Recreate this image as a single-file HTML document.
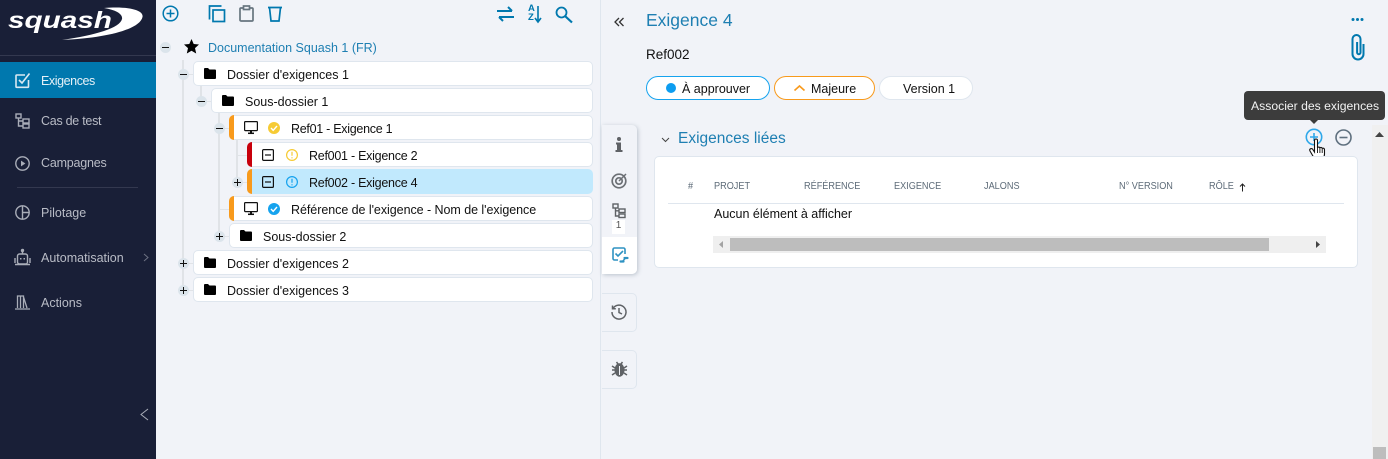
<!DOCTYPE html>
<html><head><meta charset="utf-8"><title>Squash</title>
<style>
*{box-sizing:border-box}
html,body{margin:0;padding:0;width:1388px;height:459px;overflow:hidden;background:#f1f3f8;font-family:"Liberation Sans",sans-serif;font-size:12.5px;color:#111}
.a{position:absolute}
.t{position:absolute;white-space:nowrap;line-height:16px}
#side{left:0;top:0;width:156px;height:459px;background:#191f37}
.nav{position:absolute;left:41px;color:#b9bcc6;font-size:12.5px;line-height:16px;white-space:nowrap}
.row{position:absolute;height:25px;background:#fff;border:1px solid #dfe6ee;border-radius:5px}
.row.s{background:#c1e9fd;border-color:#c1e9fd}
.bar{position:absolute;left:-1px;top:-1px;bottom:-1px;width:5px;border-radius:5px 0 0 5px}
.tg{position:absolute;width:11px;height:11px;border-radius:50%;background:#dbe4eb}
.tg:before{content:"";position:absolute;left:2px;top:5px;width:7px;height:1px;background:#111}
.tg.p:after{content:"";position:absolute;left:5px;top:2px;width:1px;height:7px;background:#111}
.l{position:absolute;background:#e0e3e7}
.th{position:absolute;top:179px;font-size:10.5px;color:#5d6b78;white-space:nowrap;line-height:14px;transform:scaleX(.87);transform-origin:0 0}
.pill{position:absolute;top:76px;height:24px;border-radius:12px;background:#fff;font-size:12.5px;line-height:22px;white-space:nowrap}
svg{position:absolute;overflow:visible}
.tab{position:absolute;left:602px;width:35px;background:#f1f3f8;border:1px solid #dfe6ee;border-left:0;border-radius:0 5px 5px 0}
</style></head><body>

<div id="side" class="a"></div>
<div class="t" style="left:8px;top:6px;font:italic bold 23px/28px 'Liberation Sans',sans-serif;color:#fff;transform:scaleX(1.29);transform-origin:0 0">squash</div>
<svg style="left:0;top:0" width="156" height="60" viewBox="0 0 156 60">
<path d="M104 8C128 6 144 10 142.500 17C140 29 108 38 62 40C96 35 120 28 122 19C123 14 116 10 104 8Z" fill="#fff"/>
</svg>
<div class="a" style="left:0;top:55px;width:156px;height:1px;background:#33384f"></div>
<div class="a" style="left:0;top:62px;width:156px;height:36px;background:#0078ae"></div>
<div class="a" style="left:17px;top:187px;width:121px;height:1px;background:#33384f"></div>

<svg style="left:15px;top:72px" width="15" height="16" fill="none" stroke="#d9e9f2" stroke-width="1.600"><path d="M13.500 8v6.500a.8.800 0 01-.8.800H1.800a.8.800 0 01-.8-.8V3.800a.8.800 0 01.8-.8H10"/><path d="M4 8l3 3 7.500-9.500"/></svg>
<div class="nav" style="top:73px;color:#e6f1f7;letter-spacing:-.42px">Exigences</div>
<svg style="left:15px;top:113px" width="15" height="16" fill="none" stroke="#a9adb8" stroke-width="1.400"><rect x="1" y="1" width="5" height="4"/><rect x="8" y="6" width="6" height="4"/><rect x="8" y="11" width="6" height="4"/><path d="M3.500 5v8H8M3.500 8H8"/></svg>
<div class="nav" style="top:113px;letter-spacing:-.27px">Cas de test</div>
<svg style="left:15px;top:156px" width="15" height="15" fill="none" stroke="#a9adb8" stroke-width="1.400"><circle cx="7.500" cy="7.500" r="6.700"/><path d="M6 4.600v5.800l4.400-2.900z" fill="#a9adb8" stroke="none"/></svg>
<div class="nav" style="top:155px;letter-spacing:-.2px">Campagnes</div>
<svg style="left:15px;top:205px" width="15" height="15" fill="none" stroke="#a9adb8" stroke-width="1.400"><circle cx="7.500" cy="7.500" r="6.700"/><path d="M7.500 1v13M7.500 7.500h6.500"/></svg>
<div class="nav" style="top:205px">Pilotage</div>
<svg style="left:15px;top:249px" width="15" height="17" fill="none" stroke="#a9adb8" stroke-width="1.400"><circle cx="7.500" cy="1.500" r="1" fill="#a9adb8"/><path d="M7.500 2v3"/><rect x="2.500" y="5" width="10" height="10" rx="2"/><path d="M0 9v5M15 9v5M0 15.500h15"/><rect x="5" y="9" width="1.500" height="1.500" fill="#a9adb8" stroke="none"/><rect x="8.500" y="9" width="1.500" height="1.500" fill="#a9adb8" stroke="none"/></svg>
<div class="nav" style="top:250px">Automatisation</div>
<svg style="left:143px;top:253px" width="6" height="9" fill="none" stroke="#6d7283" stroke-width="1"><path d="M1 1l4 3.500-4 3.500"/></svg>
<svg style="left:15px;top:295px" width="15" height="15" fill="none" stroke="#a9adb8" stroke-width="1.300"><path d="M2.500 13V1h3v12M5.500 13V1h3v12M8.500 2l3.500 11M0 14h15"/></svg>
<div class="nav" style="top:295px">Actions</div>
<svg style="left:140px;top:408px" width="8" height="13" fill="none" stroke="#a9adb8" stroke-width="1"><path d="M8 1L1 6.500 8 12"/></svg>

<!-- toolbar -->
<svg style="left:162px;top:5px" width="17" height="17" fill="none" stroke="#0078ae" stroke-width="1.500"><circle cx="8.500" cy="8.500" r="7.300"/><path d="M8.500 4.500v8M4.500 8.500h8"/></svg>
<svg style="left:208px;top:5px" width="18" height="18" fill="none" stroke="#0078ae" stroke-width="1.700"><path d="M1.500 14.500V1h12"/><rect x="5" y="5" width="11.500" height="11.500"/></svg>
<svg style="left:239px;top:5px" width="15" height="17" fill="none" stroke="#67757f" stroke-width="1.700"><rect x="1" y="3" width="13" height="13" rx="1"/><rect x="4.500" y="1" width="6" height="3.500" fill="#f1f3f8"/></svg>
<svg style="left:268px;top:6px" width="14" height="16" fill="none" stroke="#0078ae" stroke-width="1.700"><path d="M0 1.500h14M1.500 1.500l1.500 13.500h8l1.500-13.500"/></svg>
<svg style="left:497px;top:6px" width="17" height="16" fill="none" stroke="#0078ae" stroke-width="2"><path d="M0 5h15M11 1l4 4M2 11h15M6 15l-4-4"/></svg>
<svg style="left:526px;top:6px" width="16" height="17" fill="none" stroke="#0078ae" stroke-width="1.600"><path d="M12 0v15M9 12l3 4 3-4"/></svg>
<div class="t" style="left:528px;top:4px;font-size:9.500px;font-weight:bold;color:#0078ae;line-height:10px">A</div>
<div class="t" style="left:528px;top:13px;font-size:9.500px;font-weight:bold;color:#0078ae;line-height:10px">Z</div>
<svg style="left:555px;top:6px" width="18" height="17" fill="none" stroke="#0078ae" stroke-width="1.800"><circle cx="6.500" cy="6.500" r="5"/><path d="M10 10l7 6.500" stroke-width="2.200"/></svg>

<!-- tree lines -->
<div class="l" style="left:182px;top:60px;width:2px;height:230px"></div>
<div class="l" style="left:200px;top:86px;width:2px;height:16px"></div>
<div class="l" style="left:218px;top:113px;width:2px;height:123px"></div>
<div class="l" style="left:236px;top:140px;width:2px;height:42px"></div>
<div class="l" style="left:237px;top:155px;width:10px;height:1px"></div>
<div class="l" style="left:237px;top:182px;width:10px;height:1px"></div>
<div class="l" style="left:219px;top:209px;width:10px;height:1px"></div>
<div class="l" style="left:219px;top:236px;width:10px;height:1px"></div>
<div class="l" style="left:219px;top:128px;width:10px;height:1px"></div>
<div class="l" style="left:201px;top:101px;width:10px;height:1px"></div>
<div class="l" style="left:183px;top:74px;width:10px;height:1px"></div>
<div class="l" style="left:183px;top:263px;width:10px;height:1px"></div>
<div class="l" style="left:183px;top:290px;width:10px;height:1px"></div>
<div class="tg" style="left:160px;top:42px"></div>
<div class="tg" style="left:178px;top:69px"></div>
<div class="tg" style="left:196px;top:96px"></div>
<div class="tg" style="left:214px;top:123px"></div>
<div class="tg p" style="left:232px;top:177px"></div>
<div class="tg p" style="left:214px;top:231px"></div>
<div class="tg p" style="left:178px;top:258px"></div>
<div class="tg p" style="left:178px;top:285px"></div>

<svg style="left:184px;top:39px" width="15" height="15"><path d="M7.500 0l2.200 5 5.300.5-4 3.600 1.200 5.400-4.700-2.800-4.700 2.800 1.200-5.400-4-3.600 5.300-.5z" fill="#000"/></svg>
<div class="t" style="left:208px;top:40px;color:#1e7fb2;font-size:12.500px">Documentation Squash 1 (FR)</div>

<div class="row" style="left:193px;top:61px;width:400px"></div>
<div class="row" style="left:211px;top:88px;width:382px"></div>
<div class="row" style="left:229px;top:115px;width:364px"><div class="bar" style="background:#f89a1c"></div></div>
<div class="row" style="left:247px;top:142px;width:346px"><div class="bar" style="background:#c8000c"></div></div>
<div class="row s" style="left:247px;top:169px;width:346px"><div class="bar" style="background:#f89a1c"></div></div>
<div class="row" style="left:229px;top:196px;width:364px"><div class="bar" style="background:#f89a1c"></div></div>
<div class="row" style="left:229px;top:223px;width:364px"></div>
<div class="row" style="left:193px;top:250px;width:400px"></div>
<div class="row" style="left:193px;top:277px;width:400px"></div>

<svg style="left:204px;top:68px" width="12" height="11"><path d="M0 1q0-1 1-1h3l1.500 1.500H11q1 0 1 1V10q0 1-1 1H1q-1 0-1-1z"/></svg>
<svg style="left:222px;top:95px" width="12" height="11"><path d="M0 1q0-1 1-1h3l1.500 1.500H11q1 0 1 1V10q0 1-1 1H1q-1 0-1-1z"/></svg>
<svg style="left:240px;top:230px" width="12" height="11"><path d="M0 1q0-1 1-1h3l1.500 1.500H11q1 0 1 1V10q0 1-1 1H1q-1 0-1-1z"/></svg>
<svg style="left:204px;top:257px" width="12" height="11"><path d="M0 1q0-1 1-1h3l1.500 1.500H11q1 0 1 1V10q0 1-1 1H1q-1 0-1-1z"/></svg>
<svg style="left:204px;top:284px" width="12" height="11"><path d="M0 1q0-1 1-1h3l1.500 1.500H11q1 0 1 1V10q0 1-1 1H1q-1 0-1-1z"/></svg>

<svg style="left:244px;top:121px" width="14" height="13" fill="none" stroke="#111" stroke-width="1.200"><rect x=".6" y=".6" width="12.800" height="9" rx=".8"/><path d="M4 12.300h6" stroke-width="1.500"/><path d="M7 10v2" stroke-width="2"/></svg>
<svg style="left:244px;top:202px" width="14" height="13" fill="none" stroke="#111" stroke-width="1.200"><rect x=".6" y=".6" width="12.800" height="9" rx=".8"/><path d="M4 12.300h6" stroke-width="1.500"/><path d="M7 10v2" stroke-width="2"/></svg>
<svg style="left:262px;top:149px" width="12" height="12" fill="none" stroke="#111" stroke-width="1.200"><rect x=".6" y=".6" width="10.800" height="10.800" rx="1"/><path d="M3 6h6"/></svg>
<svg style="left:262px;top:176px" width="12" height="12" fill="none" stroke="#111" stroke-width="1.200"><rect x=".6" y=".6" width="10.800" height="10.800" rx="1"/><path d="M3 6h6"/></svg>

<svg style="left:268px;top:122px" width="12" height="12"><circle cx="6" cy="6" r="6" fill="#f6cb35"/><path d="M3 6l2.200 2.300L9 4" fill="none" stroke="#fff" stroke-width="1.400"/></svg>
<svg style="left:268px;top:203px" width="12" height="12"><circle cx="6" cy="6" r="6" fill="#16a3ee"/><path d="M3 6l2.200 2.300L9 4" fill="none" stroke="#fff" stroke-width="1.400"/></svg>
<svg style="left:286px;top:149px" width="12" height="12" fill="none" stroke="#f6cb35" stroke-width="1.200"><circle cx="6" cy="6" r="5.400"/><path d="M6 2.800v4M6 8.200v1.200"/></svg>
<svg style="left:286px;top:176px" width="12" height="12" fill="none" stroke="#16a3ee" stroke-width="1.200"><circle cx="6" cy="6" r="5.400"/><path d="M6 2.800v4M6 8.200v1.200"/></svg>

<div class="t" style="left:227px;top:67px">Dossier d'exigences 1</div>
<div class="t" style="left:245px;top:94px">Sous-dossier 1</div>
<div class="t" style="left:291px;top:121px;letter-spacing:-.28px">Ref01 - Exigence 1</div>
<div class="t" style="left:309px;top:148px;letter-spacing:-.26px">Ref001 - Exigence 2</div>
<div class="t" style="left:309px;top:175px;letter-spacing:-.26px">Ref002 - Exigence 4</div>
<div class="t" style="left:291px;top:202px;letter-spacing:-.05px">Référence de l'exigence - Nom de l'exigence</div>
<div class="t" style="left:263px;top:229px">Sous-dossier 2</div>
<div class="t" style="left:227px;top:256px">Dossier d'exigences 2</div>
<div class="t" style="left:227px;top:283px">Dossier d'exigences 3</div>

<!-- divider -->
<div class="a" style="left:600px;top:0;width:1px;height:459px;background:#dfe6ee"></div>

<!-- header -->
<svg style="left:614px;top:17px" width="10" height="10" fill="none" stroke="#333" stroke-width="1.300"><path d="M5 1L1 5l4 4M9.500 1l-4 4 4 4"/></svg>
<div class="t" style="left:646px;top:10px;font-size:17.500px;line-height:21px;color:#1e7fb2">Exigence 4</div>
<div class="t" style="left:646px;top:47px;font-size:13.500px;color:#111">Ref002</div>

<div class="pill" style="left:646px;width:124px;border:1px solid #16a3ee"></div>
<div class="a" style="left:666px;top:83px;width:10px;height:10px;border-radius:50%;background:#0d9df0"></div>
<div class="t" style="left:682px;top:81px">À approuver</div>
<div class="pill" style="left:774px;width:101px;border:1px solid #f89a1c"></div>
<svg style="left:794px;top:85px" width="11" height="6" fill="none" stroke="#f89a1c" stroke-width="1.600"><path d="M.5 5.500L5.500 1l5 4.500"/></svg>
<div class="t" style="left:811px;top:81px">Majeure</div>
<div class="pill" style="left:879px;width:94px;border:1px solid #dfe6ee"></div>
<div class="t" style="left:903px;top:81px">Version 1</div>

<div class="a" style="left:1356px;top:18px;width:3px;height:3px;border-radius:50%;background:#0078ae;box-shadow:4.500px 0 #0078ae,-4.500px 0 #0078ae"></div>
<svg style="left:1351px;top:34px" width="14" height="26" fill="none" stroke="#0078ae" stroke-width="2"><path d="M12.500 10v10a5.500 5.500 0 01-11 0V5a4 4 0 018 0v13.500a1.700 1.700 0 01-3.400 0V8"/></svg>

<!-- side tabs -->
<div class="a" style="left:602px;top:125px;width:35px;height:149px;background:#f1f3f8;border-radius:0 5px 5px 0;box-shadow:1px 1px 4px rgba(120,135,150,.45)"></div>
<div class="a" style="left:602px;top:237px;width:35px;height:37px;background:#fff;border-radius:0 0 5px 0"></div>
<div class="a" style="left:612px;top:220px;width:13px;height:14px;background:#fff"></div>
<svg style="left:615px;top:137px" width="8" height="15" fill="#5f6266"><circle cx="4" cy="2" r="2"/><path d="M1 5.500h5v7.500h1.500v2H.5v-2H2V7.500H1z"/></svg>
<svg style="left:611px;top:172px" width="17" height="17" fill="none" stroke="#6c7075" stroke-width="1.700"><circle cx="8" cy="9" r="6.800"/><circle cx="8" cy="9" r="3.200"/><path d="M8 9l7-7" stroke-width="1.500"/></svg>
<svg style="left:612px;top:203px" width="14" height="16" fill="none" stroke="#5f6266" stroke-width="1.400"><rect x="1" y="1" width="5" height="4"/><rect x="7" y="6" width="6" height="3.500"/><rect x="7" y="11" width="6" height="3.500"/><path d="M3.500 5v8H7M3.500 7.800H7"/></svg>
<div class="t" style="left:612px;top:218px;width:13px;text-align:center;font-size:10px;color:#555">1</div>
<svg style="left:612px;top:247px" width="17" height="17" fill="none" stroke="#2e92c2" stroke-width="1.600"><path d="M6 13H2.500A1.500 1.500 0 011 11.500v-9A1.500 1.500 0 012.500 1h9A1.500 1.500 0 0113 2.500V7"/><path d="M3.500 6.500l2.500 2.500 5-5"/><path d="M8.500 14.500h3M12.500 11h3" stroke-width="2.200" stroke-linecap="round"/><path d="M10.500 14.500l3-3.500" stroke-width="1.400"/></svg>
<div class="tab" style="top:293px;height:39px"></div>
<svg style="left:611px;top:304px" width="16" height="16" fill="none" stroke="#5f6266" stroke-width="1.500"><path d="M2 4.500A7 7 0 11 1 8"/><path d="M1.500 1.500v3.300h3.300M8 4v4.500l3 1.500"/></svg>
<div class="tab" style="top:350px;height:39px"></div>
<svg style="left:612px;top:361px" width="15" height="16" fill="none" stroke="#5f6266" stroke-width="1.500"><ellipse cx="7.500" cy="9" rx="4.300" ry="6" fill="#5f6266"/><path d="M0 5l3 2M15 5l-3 2M0 9h3M12 9h3M0 14l3-2M15 14l-3-2M4.500 1l1.500 2M10.500 1L9 3"/><path d="M7.500 5v9" stroke="#f1f3f8" stroke-width="1"/></svg>

<!-- section -->
<svg style="left:661px;top:137px" width="9" height="6" fill="none" stroke="#444" stroke-width="1"><path d="M1 1l3.500 3.500L8 1"/></svg>
<div class="t" style="left:678px;top:129px;font-size:15.500px;line-height:20px;color:#1e7fb2">Exigences liées</div>

<svg style="left:1305px;top:128px" width="18" height="18" fill="none" stroke="#2fa8ea" stroke-width="1.600"><circle cx="9" cy="9" r="7.700"/><path d="M9 5v8M5 9h8"/></svg>
<svg style="left:1335px;top:129px" width="17" height="17" fill="none" stroke="#5f707f" stroke-width="1.600"><circle cx="8.500" cy="8.500" r="7.500"/><path d="M4.500 8.500h8"/></svg>
<svg style="left:1309px;top:138px" width="20" height="23"><path d="M5.500 2.500c0-2 3-2 3 0V10c0-1.300 2.400-1.300 2.400.3 0-1.300 2.300-1.300 2.300.5 0-1 2.300-1 2.300 1V16c0 3-2 5.500-5 5.500h-2c-2 0-3-1-4-2.500L1 13c-1-2 1-3 2.500-2l2 3z" fill="#fff" stroke="#111" stroke-width="1.100"/><path d="M8.500 10v5M10.900 10v5M13.200 10v5" stroke="#111" stroke-width=".9" fill="none"/></svg>

<div class="a" style="left:654px;top:156px;width:704px;height:112px;background:#fff;border:1px solid #dfe6ee;border-radius:5px"></div>
<div class="th" style="left:688px">#</div>
<div class="th" style="left:714px">PROJET</div>
<div class="th" style="left:804px">RÉFÉRENCE</div>
<div class="th" style="left:894px">EXIGENCE</div>
<div class="th" style="left:984px">JALONS</div>
<div class="th" style="left:1119px">N° VERSION</div>
<div class="th" style="left:1209px">RÔLE</div>
<svg style="left:1239px;top:183px" width="7" height="9" fill="none" stroke="#222" stroke-width="1"><path d="M3.500 8.500V1M1 3.500L3.500 1 6 3.500"/></svg>
<div class="a" style="left:668px;top:203px;width:676px;height:1px;background:#dfe6ee"></div>
<div class="t" style="left:714px;top:206px;font-size:12.500px">Aucun élément à afficher</div>
<div class="a" style="left:713px;top:236px;width:613px;height:17px;background:#efefef"></div>
<div class="a" style="left:730px;top:238px;width:539px;height:13px;background:#bdbdbd"></div>
<svg style="left:719px;top:241px" width="4" height="7"><path d="M4 0v7L0 3.500z" fill="#a3a3a3"/></svg>
<svg style="left:1316px;top:241px" width="4" height="7"><path d="M0 0v7l4-3.500z" fill="#444"/></svg>

<!-- page scrollbar -->
<div class="a" style="left:1372px;top:125px;width:16px;height:334px;background:#f0f0f0"></div>
<svg style="left:1375px;top:132px" width="9" height="5"><path d="M0 5h9L4.500 0z" fill="#444"/></svg>
<div class="a" style="left:1373px;top:447px;width:13px;height:12px;background:#bdbdbd"></div>

<!-- tooltip -->
<div class="a" style="left:1244px;top:91px;width:141px;height:29px;background:#3c3c3c;border-radius:4px"></div>
<div class="a" style="left:1310px;top:120px;width:0;height:0;border:4px solid transparent;border-top-color:#3c3c3c"></div>
<div class="t" style="left:1251px;top:98px;font-size:12.200px;color:#f2f2f2">Associer des exigences</div>

</body></html>
